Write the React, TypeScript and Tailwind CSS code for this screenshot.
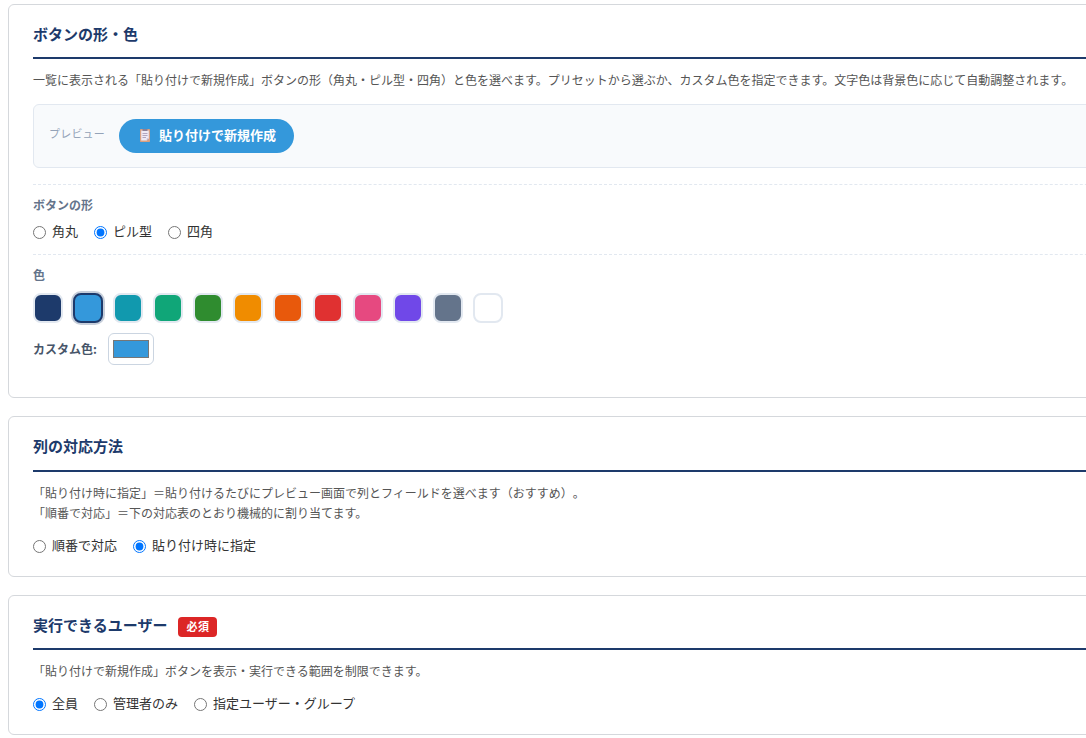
import React from 'react';

interface CardProps {
  title: string;
  badge?: string;
  className: string;
  headClassName?: string;
  children: React.ReactNode;
}

interface RadioGroupProps {
  name: string;
  options: string[];
  selected: string;
}

const COLORS = [
  '#1d3a6b',
  '#3498db',
  '#1199ae',
  '#10a678',
  '#2f8c2f',
  '#f08c00',
  '#e8590c',
  '#e03131',
  '#e64980',
  '#7048e8',
  '#64748b',
  '#ffffff',
];

const SELECTED_COLOR = '#3498db';

const Card: React.FC<CardProps> = ({ title, badge, className, headClassName = 'h-[54px] pt-1.5', children }) => (
  <section className={`w-[1200px] rounded-md border border-[#d5d8dc] bg-white px-6 ${className}`}>
    <div className={`flex items-center gap-[11px] border-b-2 border-[#1d3a6b] ${headClassName}`}>
      <h2 className="text-[15px] leading-5 font-bold text-[#1d3a6b]">{title}</h2>
      {badge && (
        <span className="mt-1 h-5 rounded bg-[#dc2626] px-2 text-[11px] leading-[19px] font-bold tracking-[0.5px] text-white">
          {badge}
        </span>
      )}
    </div>
    {children}
  </section>
);

const RadioGroup: React.FC<RadioGroupProps> = ({ name, options, selected }) => (
  <div className="flex gap-4">
    {options.map((option) => (
      <label key={option} className="flex h-5 items-center gap-1.5 text-[13px] leading-5 text-[#333]">
        <input type="radio" name={name} defaultChecked={option === selected} className="mt-0.5 h-[13px] w-[13px]" />
        <span>{option}</span>
      </label>
    ))}
  </div>
);

const ClipboardIcon = () => (
  <svg width="12" height="14" viewBox="0 0 12 14">
    <rect x="1" y="1" width="10" height="13" rx="0.8" fill="#d9a080" />
    <path d="M2.2 2.5h7.6v8l-2 2H2.2z" fill="#eeeaf5" />
    <path d="M7.8 12.5v-2h2z" fill="#b8a9c6" />
    <path d="M3.5 1h5v2h-5z" fill="#8c8197" />
    <path d="M3.5 5.5h5M3.5 7.5h5M3.5 9.5h3.5" stroke="#a99fb9" strokeWidth="0.9" />
  </svg>
);

const App = () => {
  return (
    <div
      lang="ja"
      className="h-[738px] overflow-hidden bg-white pt-1 pl-2 font-['Noto_Sans_CJK_JP',sans-serif] [text-spacing-trim:space-all]"
    >
      <Card title="ボタンの形・色" className="h-[394px]">
        <p className="mt-[11px] text-xs leading-5 whitespace-nowrap text-[#555]">
          一覧に表示される「貼り付けで新規作成」ボタンの形（角丸・ピル型・四角）と色を選べます。プリセットから選ぶか、カスタム色を指定できます。文字色は背景色に応じて自動調整されます。
        </p>

        {/* プレビュー */}
        <div className="mt-3.5 flex h-16 items-start gap-3.5 rounded-md border border-[#e2e8f0] bg-[#f8fafc] px-[15px] pt-3.5">
          <span className="mt-1 w-14 text-[11px] leading-5 tracking-[0.2px] whitespace-nowrap text-[#94a3b8]">
            プレビュー
          </span>
          <button
            type="button"
            className="flex h-[34px] w-[175px] items-center gap-2 rounded-full bg-[#3498db] pb-[3px] pl-5 text-[13px] font-bold whitespace-nowrap text-white"
          >
            <ClipboardIcon />
            <span>貼り付けで新規作成</span>
          </button>
        </div>

        {/* ボタンの形 */}
        <div className="mt-4 h-[70px] border-t border-dashed border-[#e2e8f0] pt-2.5">
          <div className="mb-1.5 text-xs leading-5 font-bold text-[#64748b]">ボタンの形</div>
          <RadioGroup name="shape" options={['角丸', 'ピル型', '四角']} selected="ピル型" />
        </div>

        {/* 色 */}
        <div className="border-t border-dashed border-[#e2e8f0] pt-2.5">
          <div className="text-xs leading-5 font-bold text-[#64748b]">色</div>
          <div className="mt-2 flex gap-2.5">
            {COLORS.map((color) => (
              <button
                key={color}
                type="button"
                aria-label={color}
                className={`h-[30px] w-[30px] rounded-lg border-2 ${
                  color === SELECTED_COLOR
                    ? 'border-[#1d3a6b] shadow-[0_0_0_2px_rgba(29,58,107,0.25)]'
                    : 'border-[#e2e8f0]'
                }`}
                style={{ backgroundColor: color }}
              />
            ))}
          </div>
          <div className="mt-2.5 flex h-8 items-center gap-[11px]">
            <span className="text-xs font-bold text-[#475569]">カスタム色:</span>
            <div className="flex h-8 w-[46px] items-center justify-center rounded-md border border-[#cbd5e1] bg-white">
              <div className="h-[18px] w-9 border border-[#767676] bg-[#3498db]" />
            </div>
          </div>
        </div>
      </Card>

      <Card title="列の対応方法" className="mt-[18px] h-[161px]" headClassName="h-[55px] pt-1">
        <p className="mt-[11px] text-xs leading-5 text-[#555]">
          「貼り付け時に指定」＝貼り付けるたびにプレビュー画面で列とフィールドを選べます（おすすめ）。
          <br />
          「順番で対応」＝下の対応表のとおり機械的に割り当てます。
        </p>
        <div className="mt-3">
          <RadioGroup name="mapping" options={['順番で対応', '貼り付け時に指定']} selected="貼り付け時に指定" />
        </div>
      </Card>

      <Card title="実行できるユーザー" badge="必須" className="mt-[18px] h-[140px]">
        <p className="mt-[11px] text-xs leading-5 text-[#555]">
          「貼り付けで新規作成」ボタンを表示・実行できる範囲を制限できます。
        </p>
        <div className="mt-3">
          <RadioGroup name="users" options={['全員', '管理者のみ', '指定ユーザー・グループ']} selected="全員" />
        </div>
      </Card>
    </div>
  );
};

export default App;
